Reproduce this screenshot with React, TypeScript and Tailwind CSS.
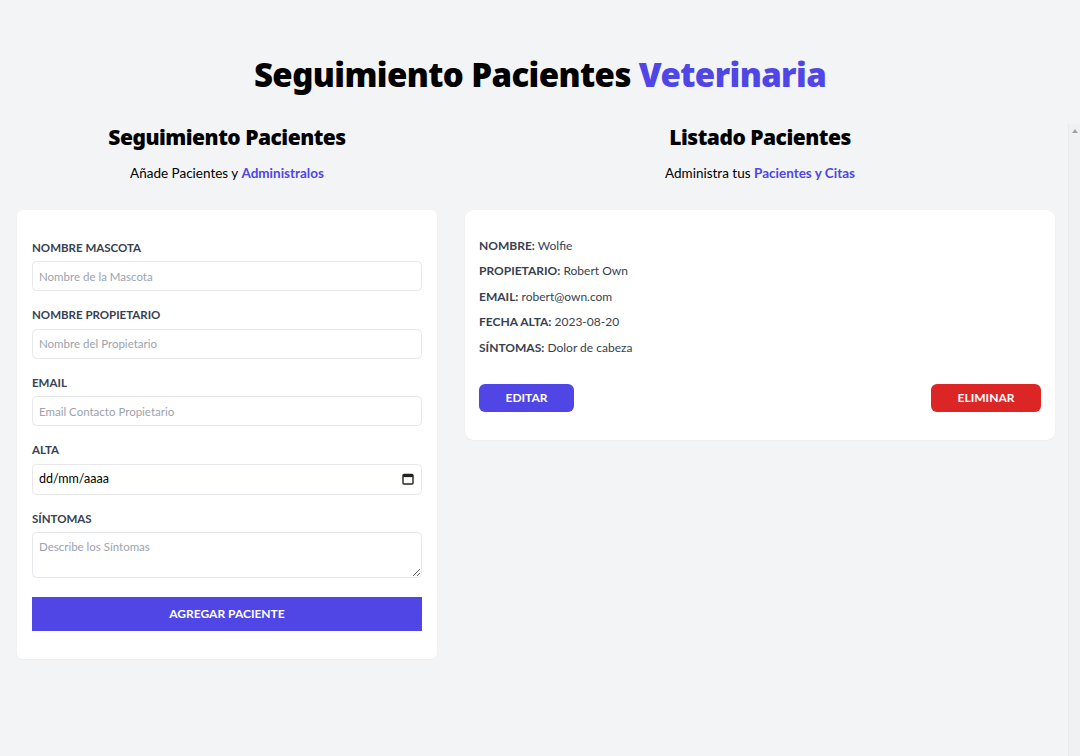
import React from "react";

const font = { fontFamily: "Lato, 'Noto Sans', sans-serif" };
const heavy = { fontFamily: "'Noto Sans', Lato, sans-serif" };

function Field({ label, placeholder }: { label: string; placeholder: string }) {
  return (
    <div className="mb-[15px]">
      <label className="block text-[11.5px] leading-[18px] font-bold uppercase text-[#374151]">{label}</label>
      <input
        type="text"
        placeholder={placeholder}
        className="mt-[4.5px] block w-full h-[30px] px-[6px] text-[11.5px] border-[1.5px] border-[#e6e7eb] rounded-[4.5px] placeholder-[#9ca3af] outline-none bg-white"
      />
    </div>
  );
}

function CalendarIcon() {
  return (
    <svg width="12" height="12" viewBox="0 0 12 12" className="block">
      <rect x="1" y="1.5" width="10" height="9.5" rx="1" fill="none" stroke="#222" strokeWidth="1.4" />
      <rect x="1" y="1.5" width="10" height="2.6" fill="#222" />
    </svg>
  );
}

export default function App() {
  return (
    <div className="h-[756px] overflow-hidden bg-[#f3f4f6]" style={font}>
      <h1 className="pt-[55px] text-center text-[33px] leading-[40px] tracking-[-0.6px] font-black text-black" style={heavy}>
        Seguimiento Pacientes <span className="text-[#4f46e5]">Veterinaria</span>
      </h1>
      <div className="flex mt-[29px]">
        <div className="w-[454px] px-[17px]">
          <h2 className="text-center text-[21px] leading-[27px] tracking-[-0.5px] font-black text-black" style={heavy}>Seguimiento Pacientes</h2>
          <p className="mt-[12px] text-center text-[13.5px] leading-[21px] text-black">
            Añade Pacientes y <span className="text-[#4f46e5] font-bold">Administralos</span>
          </p>
          <form className="mt-[26px] bg-white rounded-[6px] shadow-[0_1px_2px_rgba(0,0,0,0.03)] px-[15px] pt-[28.5px] pb-[28px]">
            <Field label="Nombre Mascota" placeholder="Nombre de la Mascota" />
            <Field label="Nombre Propietario" placeholder="Nombre del Propietario" />
            <Field label="Email" placeholder="Email Contacto Propietario" />
            <div className="mb-[15px]">
              <label className="block text-[11.5px] leading-[18px] font-bold uppercase text-[#374151]">Alta</label>
              <div className="mt-[4.5px] flex items-center justify-between h-[31px] pl-[6px] pr-[7px] border-[1.5px] border-[#e6e7eb] rounded-[4.5px] bg-white">
                <span className="text-[12.5px] text-black">dd/mm/aaaa</span>
                <CalendarIcon />
              </div>
            </div>
            <div className="mb-[15px]">
              <label className="block text-[11.5px] leading-[18px] font-bold uppercase text-[#374151]">Síntomas</label>
              <textarea
                placeholder="Describe los Síntomas"
                className="mt-[4.5px] block w-full h-[46px] px-[6px] py-[6px] text-[11.5px] leading-[16px] border-[1.5px] border-[#e6e7eb] rounded-[4.5px] placeholder-[#9ca3af] outline-none bg-white"
              />
            </div>
            <button
              type="button"
              className="mt-[19px] block w-full h-[34px] bg-[#4f46e5] text-white uppercase font-bold text-[12px]"
            >
              Agregar Paciente
            </button>
          </form>
        </div>
        <div className="flex-1 flex h-[632px]">
          <div className="flex-1 pl-[11px] pr-[13px]">
            <h2 className="text-center text-[21px] leading-[27px] tracking-[-0.5px] font-black text-black" style={heavy}>Listado Pacientes</h2>
            <p className="mt-[12px] text-center text-[13.5px] leading-[21px] text-black">
              Administra tus <span className="text-[#4f46e5] font-bold">Pacientes y Citas</span>
            </p>
            <div className="mt-[26px] bg-white rounded-[9px] shadow-[0_1px_2px_rgba(0,0,0,0.03)] px-[14px] pt-[27px] pb-[28px]">
              {[
                ["Nombre:", "Wolfie"],
                ["Propietario:", "Robert Own"],
                ["Email:", "robert@own.com"],
                ["Fecha Alta:", "2023-08-20"],
                ["Síntomas:", "Dolor de cabeza"],
              ].map(([k, v]) => (
                <p key={k} className="text-[12px] leading-[18px] mb-[7.4px] text-[#374151]">
                  <span className="font-bold uppercase">{k}</span> {v}
                </p>
              ))}
              <div className="mt-[27px] flex justify-between">
                <button type="button" className="h-[28px] w-[95px] rounded-[6px] bg-[#4f46e5] text-white uppercase font-bold text-[12px]">
                  Editar
                </button>
                <button type="button" className="h-[28px] w-[110px] rounded-[6px] bg-[#dc2626] text-white uppercase font-bold text-[12px]">
                  Eliminar
                </button>
              </div>
            </div>
          </div>
          <div className="w-[12px] bg-[#f0f1f3] border-l border-[#e9eaed] flex justify-center pt-[5px]">
            <svg width="6" height="4" viewBox="0 0 6 4"><path d="M0 4 L3 0 L6 4 Z" fill="#a3a3a3" /></svg>
          </div>
        </div>
      </div>
    </div>
  );
}
